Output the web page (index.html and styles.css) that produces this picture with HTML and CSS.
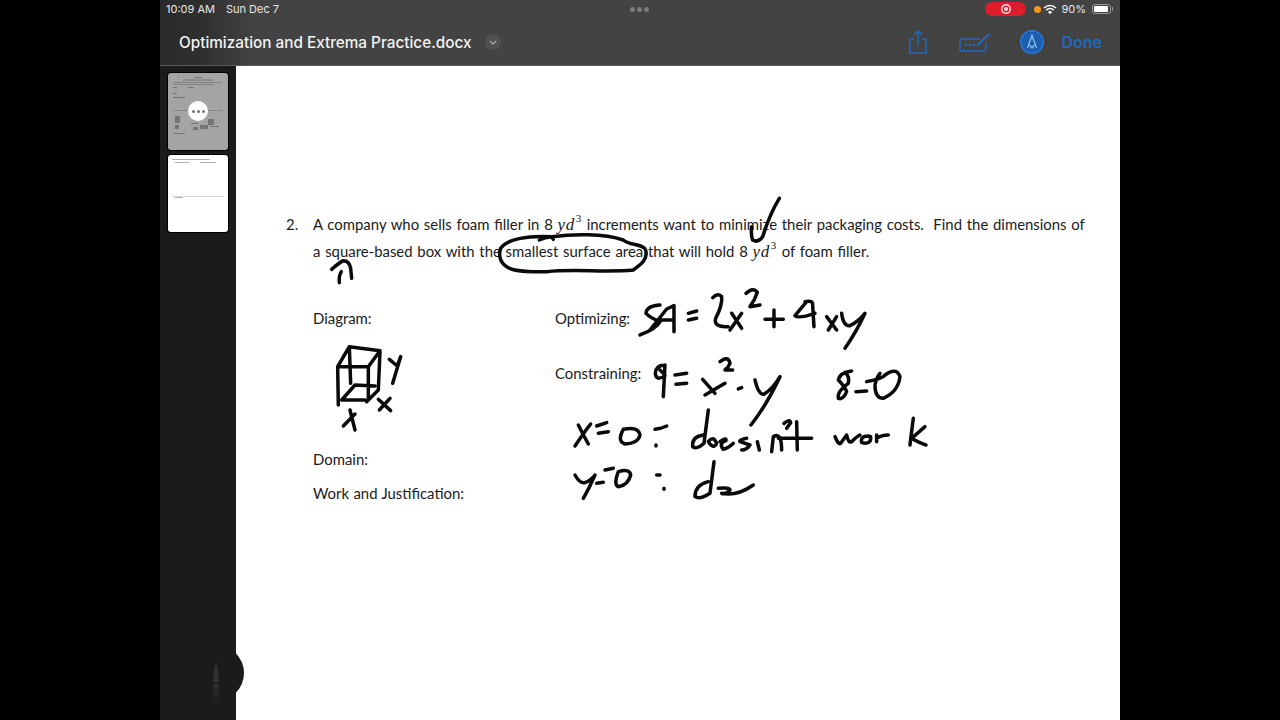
FILE: index.html
```html
<!DOCTYPE html>
<html lang="en">
<head>
    <meta charset="UTF-8">
    <meta name="viewport" content="width=device-width, initial-scale=1.0">
    <title>Optimization and Extrema Practice.docx</title>
    <link rel="stylesheet" href="styles.css">
</head>
<body>

<div class="tablet">
    <!-- Status bar and toolbar -->
    <header class="topbar">
        <div class="status">
            <div class="status-left">
                <span>10:09 AM</span>
                <span>Sun Dec 7</span>
            </div>
            <div class="status-dots"><i></i><i></i><i></i></div>
            <div class="status-right">
                <span class="rec-pill"><span class="rec-ring"></span></span>
                <span class="orange-dot"></span>
                <svg class="wifi" viewBox="0 0 16 12" width="14" height="11">
                    <path d="M8 11.5 5.6 8.8a3.4 3.4 0 0 1 4.8 0z" fill="#fff"/>
                    <path d="M3.6 6.8a6.2 6.2 0 0 1 8.8 0" fill="none" stroke="#fff" stroke-width="1.7"/>
                    <path d="M1.2 4.2a9.6 9.6 0 0 1 13.6 0" fill="none" stroke="#fff" stroke-width="1.7"/>
                </svg>
                <span class="battery-text">90%</span>
                <span class="battery"><span class="battery-fill"></span></span>
                <span class="battery-cap"></span>
            </div>
        </div>
        <div class="toolbar">
            <div class="doc-title">Optimization and Extrema Practice.docx</div>
            <span class="title-chevron">
                <svg viewBox="0 0 10 6" width="8" height="5"><path d="M1 1l4 4 4-4" fill="none" stroke="#b5b5b5" stroke-width="1.5"/></svg>
            </span>
            <div class="toolbar-actions">
                <svg class="tool-share" viewBox="0 0 20 24" width="20" height="24">
                    <path d="M6 9H2v14h16V9h-4M10 15V1M6 5l4-4 4 4" fill="none" stroke="#2069bd" stroke-width="1.5"/>
                </svg>
                <svg class="tool-markup" viewBox="0 0 32 20" width="32" height="20">
                    <path d="M21 7H2.500a1.500 1.500 0 0 0-1.500 1.500v9A1.500 1.500 0 0 0 2.500 19h23a1.500 1.500 0 0 0 1.500-1.500V11" fill="none" stroke="#2069bd" stroke-width="1.500"/>
                    <path d="M18 14 30 2" stroke="#2069bd" stroke-width="2"/>
                    <path d="M6 13h2M10 13h2M14 13h2" stroke="#2069bd" stroke-width="1.800"/>
                </svg>
                <svg class="tool-pencil" viewBox="0 0 24 24" width="24" height="24">
                    <circle cx="12" cy="12" r="11.200" fill="#1c5fae" stroke="#2479dc" stroke-width="1.500"/>
                    <path d="M7.500 18 12 5.500 16.500 18M9.500 15l2.500 3 2.500-3" fill="none" stroke="#8dbdf0" stroke-width="1.300"/>
                </svg>
                <span class="done">Done</span>
            </div>
        </div>
    </header>

    <div class="workspace">
        <!-- Page thumbnails -->
        <aside class="sidebar">
            <div class="thumb thumb-active">
                <svg class="thumb-art" viewBox="0 0 60 77" width="60" height="77">
                    <g fill="#5c5c5c">
                        <rect x="26" y="4" width="8" height="1"/>
                        <rect x="15" y="6.500" width="30" height="1"/>
                        <rect x="6" y="9" width="48" height="1" opacity=".7"/>
                        <rect x="6" y="11" width="40" height="1" opacity=".7"/>
                        <rect x="5" y="14" width="4" height="1"/>
                        <rect x="20" y="14" width="6" height="1"/>
                        <rect x="5" y="20" width="4" height="1"/>
                        <rect x="5" y="24" width="12" height="1"/>
                        <rect x="5" y="37" width="50" height="1" opacity=".6"/>
                        <rect x="7" y="43" width="5" height="7"/>
                        <rect x="7" y="52" width="4" height="4"/>
                        <rect x="5" y="60" width="12" height="1"/>
                        <rect x="23" y="50" width="7" height="1"/>
                        <rect x="25" y="54" width="5" height="3"/>
                        <rect x="32" y="52" width="8" height="4"/>
                        <rect x="40" y="46" width="6" height="6"/>
                        <rect x="42" y="53" width="9" height="1"/>
                    </g>
                </svg>
                <div class="thumb-more"><i></i><i></i><i></i></div>
            </div>
            <div class="thumb">
                <svg class="thumb-art" viewBox="0 0 60 77" width="60" height="77">
                    <g fill="#8a8a8a">
                        <rect x="4" y="4" width="38" height="1"/>
                        <rect x="7" y="7" width="14" height="1"/>
                        <rect x="32" y="7" width="16" height="1"/>
                        <rect x="4" y="41" width="52" height="1" opacity=".5"/>
                        <rect x="7" y="42" width="8" height="1"/>
                    </g>
                </svg>
            </div>
        </aside>

        <!-- Document page -->
        <main class="page">
            <div class="question">
                <span class="q-number">2.</span>
                <div class="q-text">
                    <div class="q-line">A company who sells foam filler in 8 <span class="math">yd<sup>3</sup></span> increments want to minimize their packaging costs.&nbsp; Find the dimensions of</div>
                    <div class="q-line">a square-based box with the smallest surface area that will hold 8 <span class="math">yd<sup>3</sup></span> of foam filler.</div>
                </div>
            </div>
            <div class="work-grid">
                <div class="work-left">
                    <div class="label label-diagram">Diagram:</div>
                    <div class="label label-domain">Domain:</div>
                    <div class="label">Work and Justification:</div>
                </div>
                <div class="work-right">
                    <div class="label label-opt">Optimizing:</div>
                    <div class="label">Constraining:</div>
                </div>
            </div>
        </main>
    </div>

    <!-- Pencil palette tab -->
    <div class="pencil-tab">
        <svg viewBox="0 0 12 42" width="12" height="42">
            <defs>
                <linearGradient id="pencilFade" x1="0" y1="0" x2="0" y2="1">
                    <stop offset="0" stop-color="#3a3a3a"/>
                    <stop offset=".6" stop-color="#2c2c2c"/>
                    <stop offset="1" stop-color="#1b1b1b"/>
                </linearGradient>
            </defs>
            <path d="M6 0 8.500 12 10 42H2L3.500 12z" fill="url(#pencilFade)"/>
            <path d="M2.600 21h6.800" stroke="#141414" stroke-width="1"/>
        </svg>
    </div>

    <!-- Apple Pencil ink over the page -->
    <svg class="ink" viewBox="0 0 960 720" width="960" height="720">
        <g transform="translate(120 190) scale(.3333)">
            <path d="M778 150Q795 142 815 140L820 148"/>
            <path d="M815 140C880 132 970 130 1030 150C1050 168 1090 160 1097 180C1105 210 1080 225 1060 240C980 248 880 236 800 245C750 246 700 246 680 230C660 218 655 195 662 175C680 148 740 136 815 140Z"/>
            <path d="M155 238Q175 220 190 212Q208 212 212 235L215 265M178 278Q176 258 184 245"/>
        </g>
        <g transform="translate(530 190) scale(.3333)">
            <path d="M185 110Q182 135 188 150Q205 160 218 140Q240 70 268 25"/>
        </g>
        <g transform="translate(140 300) scale(.3333)">
            <path d="M115 315 113 200 148 140 240 152 205 200H113M148 140 152 250M205 200V300M240 155 235 270 200 305M125 300H195M125 300 165 255 225 258"/>
            <path d="M235 298 272 332M270 295 238 330"/>
            <path d="M268 178 292 198 302 170 278 250"/>
            <path d="M130 378 165 342M150 330 165 390"/>
        </g>
        <g transform="translate(390 285) scale(.3333)">
            <path d="M330 60Q290 62 288 85Q300 98 330 110Q320 130 270 150"/>
            <path d="M300 135 350 72 372 62V140M330 105H370"/>
            <path d="M415 85 440 78M415 105 440 100"/>
            <path d="M488 38Q505 22 515 35Q518 60 497 100Q490 128 535 125"/>
            <path d="M545 85 575 130M575 85 540 135"/>
            <path d="M588 25Q610 5 622 22Q615 45 600 65L630 60"/>
            <path d="M645 103H700M672 75V125"/>
            <path d="M770 50 735 92Q745 102 795 85M765 50Q790 45 788 60L792 125"/>
            <path d="M830 95 860 135M860 95 835 135"/>
            <path d="M875 85Q880 125 900 122Q925 110 945 85Q920 140 885 190"/>
            <path d="M345 240Q318 240 316 265Q318 290 345 272M345 240 340 335M330 255 340 265"/>
            <path d="M375 270 410 265M378 298 410 295"/>
            <path d="M458 283 495 325M525 295 465 330"/>
            <path d="M510 230Q535 210 540 235Q535 248 525 255L548 255"/>
            <path d="M565 312 575 308"/>
            <path d="M615 285Q625 330 642 328Q670 310 690 275Q650 360 603 420"/>
            <path d="M905 258Q870 262 865 285Q885 305 890 320Q880 345 865 340Q860 320 895 295Q900 275 885 262"/>
            <path d="M918 320 950 318"/>
            <path d="M950 290Q1000 280 1005 270Q1040 245 1050 275Q1045 320 1000 340Q975 340 975 300Q978 280 990 265"/>
        </g>
        <g transform="translate(400 400) scale(.3333)">
            <path d="M45 138Q70 100 92 72M55 75Q70 105 85 132"/>
            <path d="M110 78 140 68M115 100 145 95"/>
            <path d="M190 88Q235 78 240 105Q235 130 195 132Q170 125 190 88Z"/>
            <path d="M285 88Q305 85 320 78M288 135V138"/>
            <path d="M445 30 432 130Q410 150 398 140Q395 110 430 105"/>
            <path d="M445 125Q460 105 470 130Q460 150 445 125"/>
            <path d="M480 125Q500 110 498 122Q475 130 490 148Q505 145 520 130"/>
            <path d="M560 115Q535 120 540 125L570 135Q560 150 545 150"/>
            <path d="M598 150 592 125"/>
            <path d="M635 155 640 110Q665 95 665 150"/>
            <path d="M672 70Q690 55 692 68L680 85"/>
            <path d="M710 65 712 150M655 115H755"/>
            <path d="M825 110Q835 135 842 130L860 105Q865 130 875 125Q890 110 900 105"/>
            <path d="M925 108Q900 108 905 128Q935 135 932 110Z"/>
            <path d="M950 105V125M950 115Q965 105 985 105"/>
            <path d="M1060 55 1050 135M1095 80 1055 115Q1080 130 1098 135"/>
            <path d="M45 225Q60 252 75 248Q95 240 105 225Q90 260 70 295"/>
            <path d="M135 210 160 205M110 250 130 247"/>
            <path d="M175 215Q210 205 212 225Q205 255 175 260Q160 255 175 215Z"/>
            <path d="M290 225 300 225M312 265V268"/>
            <path d="M462 185 450 280Q420 300 405 290Q405 255 445 245"/>
            <path d="M475 265Q510 262 510 270Q495 285 485 280Q530 290 580 255"/>
        </g>
    </svg>
</div>

</body>
</html>
```

FILE: styles.css
```css
body {
    margin: 0;
    background-color: #000;
    font-family: "Lato", "Liberation Sans", sans-serif;
    overflow: hidden;
}

.tablet {
    position: relative;
    width: 960px;
    height: 720px;
    margin: 0 auto;
    display: flex;
    flex-direction: column;
    overflow: hidden;
}

/* Top bar */
.topbar {
    height: 66px;
    flex-shrink: 0;
    box-sizing: border-box;
    background: linear-gradient(90deg, #2a2a2a 0, #2e2e2e 40px, #434343 95px);
    border-bottom: 1px solid #5a5a5a;
    color: #fff;
    font-family: "Inter", "Liberation Sans", sans-serif;
}

.status {
    height: 18px;
    display: flex;
    align-items: center;
    justify-content: space-between;
    position: relative;
    padding: 0 7px 0 6px;
    font-size: 11px;
    color: #e8e8e8;
}

.status-left {
    display: flex;
    gap: 11px;
}

.status-dots {
    position: absolute;
    left: 470px;
    top: 7px;
    display: flex;
    gap: 2px;
}

.status-dots i {
    width: 5px;
    height: 5px;
    border-radius: 50%;
    background-color: #7a7a7a;
}

.status-right {
    display: flex;
    align-items: center;
}

.rec-pill {
    width: 41px;
    height: 14px;
    border-radius: 7px;
    background-color: #de1d2c;
    display: flex;
    align-items: center;
    justify-content: center;
}

.rec-ring {
    width: 4px;
    height: 4px;
    border-radius: 50%;
    background-color: #f4e2e3;
    box-shadow: 0 0 0 1.5px #de1d2c, 0 0 0 3px #f4e2e3;
}

.orange-dot {
    width: 7px;
    height: 7px;
    margin-left: 8px;
    border-radius: 50%;
    background-color: #f09a1c;
}

.wifi {
    margin-left: 2px;
}

.battery-text {
    margin-left: 4px;
}

.battery {
    width: 19px;
    height: 10px;
    margin-left: 6px;
    padding: 1px;
    box-sizing: border-box;
    border: 1px solid #999;
    border-radius: 3px;
    display: flex;
}

.battery-fill {
    width: 90%;
    background-color: #fff;
    border-radius: 1px;
}

.battery-cap {
    width: 1px;
    height: 4px;
    margin-left: 1px;
    background-color: #999;
}

.toolbar {
    height: 47px;
    display: flex;
    align-items: center;
    padding: 1px 0 0 19px;
    box-sizing: border-box;
}

.doc-title {
    font-size: 15.3px;
    font-weight: 500;
    color: #f2f2f2;
}

.title-chevron {
    width: 16px;
    height: 16px;
    margin-left: 13px;
    border-radius: 50%;
    background-color: #505050;
    display: flex;
    align-items: center;
    justify-content: center;
}

.toolbar-actions {
    margin-left: auto;
    display: flex;
    align-items: center;
    padding-right: 18px;
}

.tool-share {
    margin-right: 31px;
}

.tool-markup {
    margin-right: 29px;
}

.tool-pencil {
    margin-right: 17px;
}

.done {
    font-size: 16px;
    font-weight: 600;
    color: #2069bd;
}

/* Thumbnails and page */
.workspace {
    flex: 1;
    display: flex;
    min-height: 0;
}

.sidebar {
    width: 76px;
    flex-shrink: 0;
    box-sizing: border-box;
    padding: 7px 8px 0;
    background-color: #1b1b1b;
    display: flex;
    flex-direction: column;
    gap: 5px;
}

.thumb {
    position: relative;
    height: 77px;
    background-color: #fff;
    border-radius: 3px;
    box-shadow: 0 0 0 1px #000;
    overflow: hidden;
}

.thumb-active {
    background-color: #a4a4a4;
}

.thumb-art {
    display: block;
    filter: blur(.6px);
    opacity: .65;
}

.thumb-more {
    position: absolute;
    left: 20px;
    top: 28px;
    width: 20px;
    height: 20px;
    border-radius: 50%;
    background-color: #fff;
    display: flex;
    align-items: center;
    justify-content: center;
    gap: 2px;
}

.thumb-more i {
    width: 3px;
    height: 3px;
    border-radius: 50%;
    background-color: #777;
}

.page {
    flex: 1;
    box-sizing: border-box;
    padding: 145px 0 0 50px;
    background-color: #fff;
    color: #1a1a1a;
    font-size: 14.9px;
    word-spacing: .6px;
    line-height: 27px;
}

.question {
    display: flex;
}

.q-number {
    width: 27px;
}

.q-line {
    white-space: nowrap;
    word-spacing: .95px;
}

.math {
    font-family: "Liberation Serif", serif;
    font-style: italic;
    font-size: 17px;
    letter-spacing: .6px;
}

.math sup {
    font-style: normal;
    font-size: 11px;
    line-height: 0;
    vertical-align: 8px;
    margin-left: 1px;
}

.work-grid {
    display: flex;
    margin: 40px 0 0 27px;
}

.work-left {
    width: 242px;
}

.label-diagram {
    margin-bottom: 114px;
}

.label-domain {
    margin-bottom: 7px;
}

.label-opt {
    margin-bottom: 28px;
}

/* Pencil palette tab */
.pencil-tab {
    position: absolute;
    left: 28px;
    top: 645px;
    width: 56px;
    height: 56px;
    border-radius: 50%;
    background-color: #1b1b1b;
    display: flex;
    justify-content: center;
}

.pencil-tab svg {
    margin-top: 17px;
}

.ink {
    position: absolute;
    left: 0;
    top: 0;
    pointer-events: none;
}

.ink path {
    fill: none;
    stroke: #0a0a0a;
    stroke-width: 10.5;
    stroke-linecap: round;
    stroke-linejoin: round;
}
```
